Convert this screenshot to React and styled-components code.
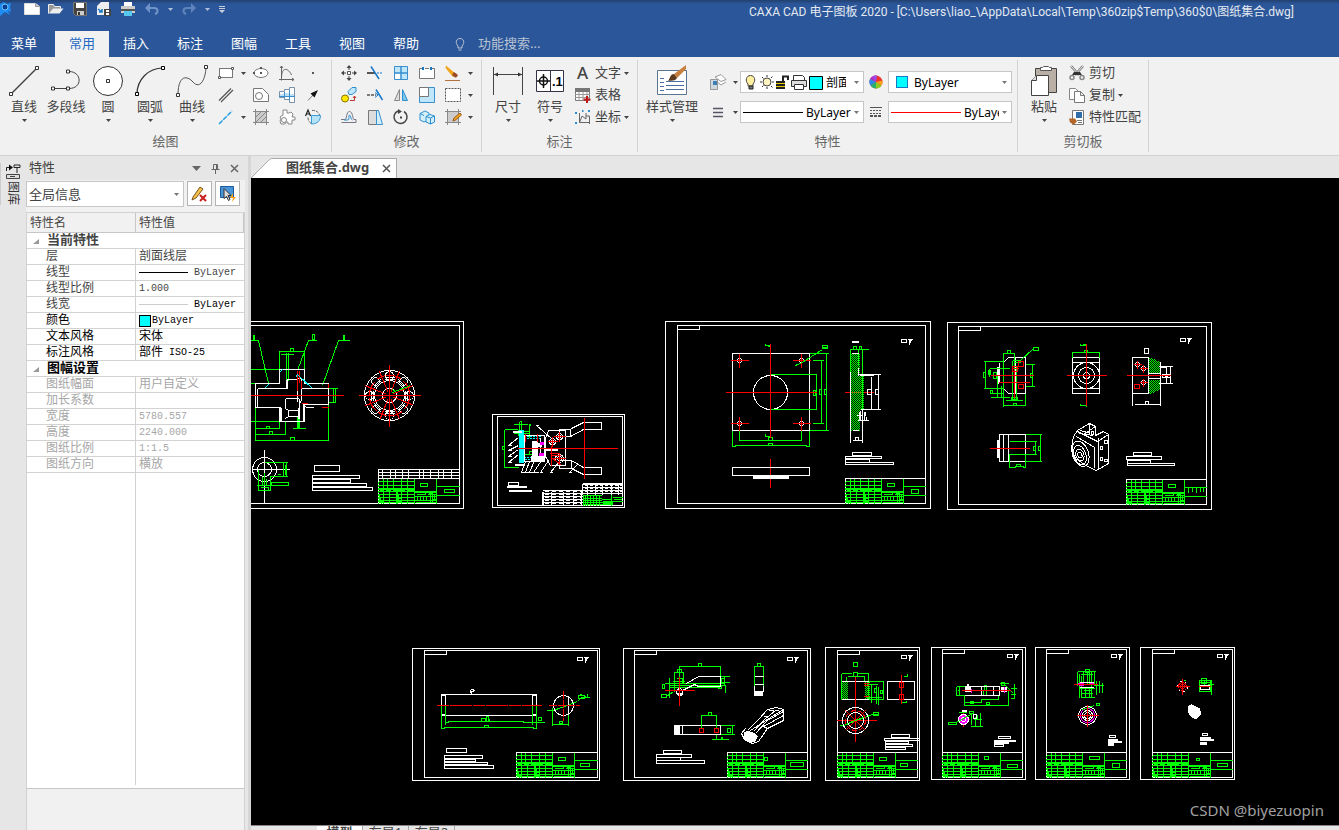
import React, { useState } from "react";
import styled, { createGlobalStyle } from "styled-components";

const uiFont = `"Noto Sans", "Noto Sans CJK SC", sans-serif`;
const titleFont = `Roboto, "Noto Sans CJK SC", sans-serif`;
const gridFont = `"Liberation Mono", "Noto Sans CJK SC", monospace`;

const ribbonTabs = ["常用", "插入", "标注", "图幅", "工具", "视图", "帮助"];

const properties = [
  { group: "当前特性" },
  { name: "层", value: "剖面线层" },
  { name: "线型", value: "ByLayer", line: "#000" },
  { name: "线型比例", value: "1.000", latin: true },
  { name: "线宽", value: "ByLayer", line: "#ccc", valueTone: "#000" },
  { name: "颜色", value: "ByLayer", swatch: true, tone: "#000" },
  { name: "文本风格", value: "宋体", tone: "#000" },
  { name: "标注风格", value: "部件", suffix: "ISO-25", tone: "#000" },
  { group: "图幅设置", tone: "#000" },
  { name: "图纸幅面", value: "用户自定义", tone: "#a6a6a6" },
  { name: "加长系数", value: "", tone: "#a6a6a6" },
  { name: "宽度", value: "5780.557", latin: true, tone: "#a6a6a6" },
  { name: "高度", value: "2240.000", latin: true, tone: "#a6a6a6" },
  { name: "图纸比例", value: "1:1.5", latin: true, tone: "#a6a6a6" },
  { name: "图纸方向", value: "横放", tone: "#a6a6a6" },
];

/* ---------- icons ---------- */

// 18 x 18 icons
const smallIcons = {
  rect: (
    <>
      <rect x="2.5" y="4.5" width="13" height="9" fill="#fff" stroke="#777" />
      <path d="M1.5 12.5h2v2h-2zM14.5 3.5h2v2h-2z" fill="#fff" stroke="#555" />
    </>
  ),
  ellipse: (
    <>
      <ellipse cx="9" cy="9" rx="7" ry="4.5" fill="#fff" stroke="#777" />
      <path d="M8 8h2v2H8zM1 8h2v2H1zM8 3h2v2H8z" fill="#555" />
    </>
  ),
  curveAxes: (
    <path d="M3.5 2v14.5M1 15.5h15M3.5 14c0-12 7-10 10-3M2 4l1.5-2L5 4M14 14l2 1.5-2 1.5" fill="none" stroke="#666" />
  ),
  point: <path d="M8 8h2v2H8z" fill="#555" />,
  parallel: <path d="M2 14.5 14 2.5M4 16 16 4" stroke="#555" strokeWidth="1.2" />,
  hole: (
    <>
      <path d="M1.5 2.5h9l6 6v7h-15z" fill="#fff" stroke="#777" />
      <circle cx="7" cy="10" r="3.5" fill="#fff" stroke="#777" />
    </>
  ),
  shaft: (
    <>
      <path d="M1.5 5.5h5v-2h5v-2h5v15h-5v-3h-5v-2h-5z" fill="#fff" stroke="#7a92a8" />
      <path d="M2 8h5v3H2zM7 7h4v4H7zM12 8h4v3h-4z" fill="#bfe0f5" />
      <path d="M1 10.5h16M11.5 4v10M6.5 6v6" stroke="#3a8fcf" />
    </>
  ),
  arrow: (
    <>
      <path d="M4 14.5 10 8" stroke="#777" />
      <path d="M14 4 6.5 7.5l4 4z" fill="#111" />
    </>
  ),
  construct: <path d="M2 16 15 3" stroke="#28a0e0" strokeWidth="1.5" strokeDasharray="5 1" />,
  hatch: (
    <>
      <path d="M3.5 3.5h11v11h-11z" fill="#ccc" stroke="#666" />
      <path d="M1 3.5h16M1 14.5h16M3.5 1v16M14.5 1v16M4 9l5-5M4 14 14 4M9 14l5-5" stroke="#888" fill="none" />
    </>
  ),
  gear: (
    <>
      <path d="M5 2h4v3h2l2-1 2 2-1 3h3v3h-3v4h-4v-2H8l-1 2H3l-1-3 1-2-1-2 3-2z" fill="#fff" stroke="#888" strokeLinejoin="round" />
      <circle cx="6" cy="12" r="2.5" fill="#fff" stroke="#888" />
    </>
  ),
  region: (
    <>
      <path d="M4 9.5a7 7 0 0 0 4 6.5M8 2.5a7 7 0 0 1 8 6" fill="none" stroke="#666" strokeDasharray="3 1" />
      <path d="M7.5 7.5h9c0 5-3 8.5-9 8.5z" fill="#b6e2f8" stroke="#3a9bd5" />
      <path d="M1.5 8 4 2l2.5 6M2.5 6h3" fill="none" stroke="#222" strokeWidth="1.2" />
    </>
  ),
  move: (
    <>
      <path d="M7.5 7.5h3v3h-3z" fill="#fff" stroke="#555" />
      <path d="M9 1 6.5 4h2v2h1V4h2zM9 17l-2.5-3h2v-2h1v2h2zM1 9l3-2.5v2h2v1H4v2zM17 9l-3-2.5v2h-2v1h2v2z" fill="#444" />
    </>
  ),
  trim: (
    <>
      <path d="M1 9h8" stroke="#555" strokeWidth="2" />
      <path d="M5 2.5 13 15" stroke="#1878c8" strokeWidth="1.5" />
      <path d="M11 9h6" stroke="#1878c8" strokeDasharray="2 1" />
    </>
  ),
  array: (
    <>
      <path d="M2.5 2.5h13v13h-13z" fill="#bfe6fb" stroke="#3a8fcf" />
      <path d="M3 10h6v5H3z" fill="#fff" />
      <path d="M9 2v14M2 9h14" stroke="#3a8fcf" strokeWidth="1.5" />
    </>
  ),
  stretchBox: (
    <>
      <path d="M4.5 4.5h-3v10h15v-10h-3M7 4.5h4" fill="#fff" stroke="#777" />
      <path d="M4 3h2v3H4zM12 3h2v3h-2z" fill="#1878c8" />
    </>
  ),
  pencil: (
    <>
      <path d="M2 1.5 12 10l-3 3L1.5 4z" fill="#f2a51c" />
      <path d="m10 8 3.5 2.5c1 1-1 3.5-2.5 3L8 11z" fill="#9b4a28" />
      <path d="M1 16.5h15" stroke="#b0713c" />
    </>
  ),
  copyMove: (
    <>
      <circle cx="5" cy="12.5" r="3.5" fill="#ffe500" stroke="#8a7600" />
      <path d="M8 5.5 12 1.5h4v4l-4 3H9z" fill="#bfe6fb" stroke="#2d8fd0" />
      <path d="M10 14.5h4.5v-4M13 12l1.5-2 1.5 2" fill="none" stroke="#b33" />
    </>
  ),
  extend: (
    <>
      <path d="M1 9h9" stroke="#555" strokeWidth="1.5" strokeDasharray="3 1" />
      <path d="M10 3.5 16.5 14" stroke="#1878c8" strokeWidth="1.5" />
      <path d="m9 6.5 3 2.5-3 2.5" fill="none" stroke="#1878c8" />
    </>
  ),
  mirror: (
    <>
      <path d="M7.5 3.5v11h-5z" fill="#ddd" stroke="#888" />
      <path d="M10.5 3.5v11h5z" fill="#7fc6ee" stroke="#2d8fd0" />
    </>
  ),
  scale: (
    <>
      <path d="M1.5 1.5h15v15h-15z" fill="#bfe6fb" stroke="#3a8fcf" />
      <path d="M1.5 1.5h9v9h-9z" fill="#fff" stroke="#777" />
    </>
  ),
  dashedBox: <path d="M1.5 2.5h15v13h-15z" fill="#fff" stroke="#555" strokeDasharray="2 1" />,
  offset: (
    <>
      <path d="M1 11.5h4c2 0 1-8 4.5-8s3 8 4.5 8h2v3H1.5" fill="none" stroke="#778" />
      <path d="M4 12h4c2 0 0-5 1.5-5s1 5 3 5" fill="none" stroke="#2d8fd0" />
    </>
  ),
  taper: (
    <>
      <path d="M2.5 2.5h8v14h-8z" fill="#ddd" stroke="#777" />
      <path d="M10.5 2.5h2l4 14h-6z" fill="#d4effc" stroke="#3a8fcf" />
    </>
  ),
  rotate: (
    <>
      <path d="M12 3.5A6.5 6.5 0 1 1 6 3" fill="none" stroke="#444" strokeWidth="1.5" />
      <path d="M6 1v5l4-2.5z" fill="#444" />
      <path d="M8 8.5h2v2H8z" fill="#444" />
    </>
  ),
  solid: (
    <>
      <path d="M2 5.5 7 3l4 2v7l-5 2-4-2z" fill="#d4effc" stroke="#2d8fd0" />
      <path d="M8 8.5 12 6.5l4.5 1.5v6l-4 2-4.5-2z" fill="#d4effc" stroke="#2d8fd0" />
      <path d="m8 8.5 4.5 1.5v6M12.5 10l4-2M2 5.5l4 2" fill="none" stroke="#2d8fd0" />
    </>
  ),
  editHatch: (
    <>
      <path d="M3.5 3.5h11v11h-11z" fill="#ccc" stroke="#666" />
      <path d="M1 3.5h16M1 14.5h16M3.5 1v16M14.5 1v16" stroke="#888" />
      <path d="m9 13 1-3 6-5 1.5 2-6 5z" fill="#f2a51c" stroke="#9b5a18" />
    </>
  ),
  letterA: (
    <text x="3" y="15" fontFamily="Noto Sans" fontSize="17" fontWeight="500" fill="#444">
      A
    </text>
  ),
  table: (
    <>
      <path d="M1.5 2.5h14v12h-14z" fill="#fff" stroke="#777" />
      <path d="M1 2h15v4H1z" fill="#777" />
      <path d="M1 8.5h15M1 11.5h15M5 6v9M9 6v9M13 6v9" stroke="#999" />
      <path d="M13 10v7M9.5 13.5h7" stroke="#c01818" strokeWidth="2" />
    </>
  ),
  coords: (
    <>
      <path d="M5.5 5v9.5H16M5.5 14.5 8 8l4 3V5M12 8h3.5v8" fill="none" stroke="#666" />
      <path d="M1 4h2v2H1zM1 14h2v2H1zM14 2h2v2h-2zM8 2h1.5v2H8z" fill="#2d8fd0" />
    </>
  ),
  layers: (
    <>
      <path d="m6 4 6-2.5 5 5-5 2zM6 7l6 5 5-3" fill="#fff" stroke="#999" />
      <path d="M1.5 6.5h7v10h-7z" fill="#cfd8de" stroke="#999" />
      <path d="M4 8h4v4H4z" fill="#3d7fb5" />
    </>
  ),
  lineWeight: <path d="M4 5.5h10M4 9.5h10M4 13.5h10" stroke="#556" strokeWidth="1.5" />,
  wheel: (
    <>
      <circle cx="9" cy="9" r="6.5" fill="#e33" />
      <path d="M9 9V2.5A6.5 6.5 0 0 0 3 6z" fill="#b033c8" />
      <path d="M9 9 3 6a6.5 6.5 0 0 0 .5 6.5z" fill="#2d8ae8" />
      <path d="m9 9-5.5 3.5A6.5 6.5 0 0 0 9 15.500z" fill="#28b070" />
      <path d="M9 9v6.5a6.5 6.5 0 0 0 5.5-3z" fill="#8ccc1f" />
      <path d="m9 9 5.5 3.5a6.5 6.5 0 0 0 1-5z" fill="#f5a21a" />
      <path d="M9 9 6 3.2A6.5 6.5 0 0 1 10 2.5z" fill="#9b4cf0" />
    </>
  ),
  lineStyle: (
    <>
      <path d="M3 4.5h12" stroke="#555" />
      <path d="M3 7.5h12M3 10.5h12" stroke="#555" strokeDasharray="2 1" />
      <path d="M3 13h12" stroke="#555" strokeWidth="2" strokeDasharray="3 1" />
    </>
  ),
  scissors: (
    <>
      <path d="m3 2 8 9M15 2l-8 9" stroke="#777" strokeWidth="2.5" />
      <path d="m3 2 8 9M15 2l-8 9" stroke="#eee" strokeWidth="1" />
      <path d="M6 8h6l2 3H4z" fill="#333" />
      <circle cx="4" cy="13.5" r="2" fill="none" stroke="#888" strokeWidth="1.5" />
      <circle cx="14" cy="13.5" r="2" fill="none" stroke="#888" strokeWidth="1.5" />
    </>
  ),
  copy: (
    <>
      <path d="M1.5 2.5h6l3 3v8h-9z" fill="#fff" stroke="#888" />
      <path d="M6.5 5.5h6l4 4v7h-10zM12.5 5.5v4h4" fill="#fff" stroke="#777" />
    </>
  ),
  match: (
    <>
      <path d="M4.5 2.5h11v14h-11z" fill="#fff" stroke="#777" />
      <path d="M8 4h6v6H8z" fill="#2f6ea8" />
      <path d="M9 12.5h5M10 14.5h4" stroke="#777" />
      <path d="M1 10.5h6l2 3-3 3-4-2z" fill="#b3652a" />
    </>
  ),
};

// 32 x 32 icons
const bigIcons = {
  line: (
    <>
      <path d="M3 29 29 3" stroke="#444" strokeWidth="1.5" />
      <path d="M1.5 27.5h3v3h-3zM27.5 1.5h3v3h-3z" fill="#fff" stroke="#333" />
    </>
  ),
  polyline: (
    <>
      <path d="M2 23.5h17c14 0 13-17 0-17" fill="none" stroke="#444" />
      <path d="M1.5 22h3v3h-3zM16.5 22h3v3h-3zM16.5 5h3v3h-3z" fill="#fff" stroke="#333" />
    </>
  ),
  circle: (
    <>
      <circle cx="16" cy="16" r="14.5" fill="#fff" stroke="#333" />
      <path d="M14.5 14.5h3v3h-3z" fill="#fff" stroke="#333" />
    </>
  ),
  arc: (
    <>
      <path d="M3 29C3 15 14 3 29 3" fill="none" stroke="#333" strokeWidth="1.2" />
      <path d="M1.5 27.5h3v3h-3zM27.5 1.5h3v3h-3z" fill="#fff" stroke="#000" />
    </>
  ),
  spline: (
    <>
      <path d="M2 30C2 10 11 10 17 17s12 0 13-14" fill="none" stroke="#555" />
      <path d="M.5 28.5h3v3h-3zM28.5 .5h3v3h-3z" fill="#fff" stroke="#333" />
    </>
  ),
  dimension: (
    <>
      <path d="M1.5 2v28M30.5 2v28M2 9.5h28" stroke="#444" />
      <path d="m2 9.5 4-2v4zM30 9.5l-4-2v4z" fill="#333" />
    </>
  ),
  tolerance: (
    <>
      <path d="M2.5 5.5h27v21h-27zM16.5 5.5v21" fill="#fff" stroke="#334" />
      <circle cx="9.5" cy="16" r="4" fill="none" stroke="#111" strokeWidth="1.5" />
      <path d="M3 16h13M9.5 9v14" stroke="#111" strokeWidth="1.5" />
      <text x="18" y="21" fontFamily="Liberation Sans" fontSize="13" fontWeight="bold" fill="#000">
        .1
      </text>
    </>
  ),
  styles: (
    <>
      <path d="M1.5 5.5h29v24h-29z" fill="#fff" stroke="#5a7590" />
      <path d="M4 13.5h4M10 16.5h18M10 20.5h18M10 24.5h18M4 17.5h4M4 21.5h4M4 25.5h4" stroke="#4a6fa0" />
      <path d="M30 0 18 9l3 4 9-9z" fill="#c67f3d" />
      <path d="m18 9 3 4c-2 4-6 2-9 3 2-2 2-7 6-7z" fill="#5c3a1e" />
    </>
  ),
  paste: (
    <>
      <path d="M7.5 3.5h21v24h-21z" fill="#b9afa4" stroke="#444" />
      <path d="M12.5 2.5h2l1-1h5l1 1h2v3h-11z" fill="#fff" stroke="#555" />
      <path d="M3.5 15.5l5-5h12v20h-17z" fill="#fff" stroke="#444" />
      <path d="M3.5 15.5h5v-5" fill="#ddd" stroke="#444" />
    </>
  ),
};

const SmallIcon = ({ name }) => (
  <svg width="18" height="18" viewBox="0 0 18 18" aria-hidden="true">
    {smallIcons[name]}
  </svg>
);

const BigIcon = ({ name }) => (
  <svg width="32" height="32" viewBox="0 0 32 32" aria-hidden="true">
    {bigIcons[name]}
  </svg>
);

const Caret = ({ color = "#444" }) => (
  <svg width="5" height="3" viewBox="0 0 5 3" aria-hidden="true">
    <path d="M0 0h5L2.5 3z" fill={color} />
  </svg>
);

/* ---------- ribbon parts ---------- */

const LargeTool = ({ icon, label, menu = true, wide }) => (
  <LargeButton $wide={wide}>
    <BigIcon name={icon} />
    <LargeLabel>{label}</LargeLabel>
    {menu && <Caret />}
  </LargeButton>
);

const IconTool = ({ icon, title }) => (
  <IconButton title={title} aria-label={title}>
    <SmallIcon name={icon} />
  </IconButton>
);

const MenuTool = ({ title, hidden }) =>
  hidden ? (
    <span />
  ) : (
    <IconButton aria-label={title}>
      <Caret />
    </IconButton>
  );

const TextTool = ({ icon, label, menu }) => (
  <TextButton>
    <SmallIcon name={icon} />
    <ToolLabel>{label}</ToolLabel>
    {menu && <Caret />}
  </TextButton>
);

const QuickAccess = () => (
  <QuickBar>
    <svg width="16" height="18" viewBox="0 0 16 18" aria-hidden="true">
      <path d="M0 4 4 2l3 2 4-1-1 4 1 5-3-1 2 4-5-3-5 4" fill="#1e8cf0" />
      <circle cx="5" cy="7" r="3" fill="#0b3f94" stroke="#6cc4ff" />
    </svg>
    <QuickButton aria-label="新建">
      <svg width="16" height="18" viewBox="0 0 16 18">
        <path d="M.5 3.5h11l4 3v8H.5z" fill="#fff" stroke="#ddd" />
        <path d="M11.5 3.5v3h4" fill="#ccc" stroke="#999" />
      </svg>
    </QuickButton>
    <QuickButton aria-label="打开">
      <svg width="16" height="18" viewBox="0 0 16 18">
        <path d="M.5 13.5v-9h5l1 2h6v2" fill="#999" stroke="#eee" />
        <path d="m1 13.5 4-5h10.5l-4 5z" fill="#eee" />
      </svg>
    </QuickButton>
    <QuickButton aria-label="保存">
      <svg width="16" height="18" viewBox="0 0 16 18">
        <path d="M1.5 2.5h13v13h-11l-2-2z" fill="#444" stroke="#777" />
        <path d="M4 3h8v5H4z" fill="#fff" />
        <path d="M5 11h7v4H5z" fill="#ccc" />
        <path d="M6 12h2v3H6z" fill="#333" />
      </svg>
    </QuickButton>
    <QuickButton aria-label="另存为">
      <svg width="16" height="18" viewBox="0 0 16 18">
        <path d="m1 6 4-4h8v13H1z" fill="#eee" />
        <path d="M2 9l4 3M6 9v3H3" stroke="#1878c8" strokeWidth="1.5" fill="none" />
        <path d="M8 9h7v7H8z" fill="#444" />
        <path d="M10 10h3v2h-3zM10 13h3v2h-3z" fill="#fff" />
      </svg>
    </QuickButton>
    <QuickButton aria-label="打印">
      <svg width="16" height="18" viewBox="0 0 16 18">
        <path d="M4 2h8v4H4z" fill="#fff" />
        <path d="M1 6h14v7H1z" fill="#ccc" />
        <path d="M1 9h14v2H1z" fill="#555" />
        <path d="M4 11h8v5H4z" fill="#56c8f0" />
      </svg>
    </QuickButton>
    <QuickButton aria-label="撤销">
      <svg width="16" height="18" viewBox="0 0 16 18">
        <path d="M3 8h7c5 0 4 5 1 6" fill="none" stroke="#7094c8" strokeWidth="2" />
        <path d="M1 8 6 3v10z" fill="#7094c8" />
      </svg>
    </QuickButton>
    <Caret color="#b0c0da" />
    <QuickButton aria-label="重做">
      <svg width="16" height="18" viewBox="0 0 16 18">
        <path d="M13 8H6c-5 0-4 5-1 6" fill="none" stroke="#5f84bb" strokeWidth="2" />
        <path d="m15 8-5-5v10z" fill="#5f84bb" />
      </svg>
    </QuickButton>
    <Caret color="#b0c0da" />
    <QuickButton aria-label="自定义">
      <svg width="8" height="18" viewBox="0 0 8 18">
        <path d="M1 6h6v1H1zM1 8h6v1H1zM1 10h6l-3 3z" fill="#c8cfdb" />
      </svg>
    </QuickButton>
  </QuickBar>
);

const LayerState = () => (
  <svg width="83" height="20" viewBox="0 0 83 20" aria-hidden="true">
    <path d="M5 12C2 9 3 3.5 7.5 3.5S13 9 10 12v2H5z" fill="#ffefa0" stroke="#444" />
    <path d="M6 14h4v3H6z" fill="#777" stroke="#222" />
    <circle cx="24" cy="10" r="4" fill="#fff3c0" stroke="#444" />
    <path d="M24 3v2M24 15v2M17 10h2M29 10h2M19 5l1.5 1.5M28 14l1.5 1.5M19 15l1.5-1.5M28 6l1.5-1.5" stroke="#333" />
    <path d="M33 9h9v8h-9z" fill="#222" />
    <path d="M33 11.5h9M33 14.5h9" stroke="#e8c800" />
    <path d="M40 9V4.5h5V8" fill="none" stroke="#222" strokeWidth="2" />
    <path d="M50.5 8.5v-5h9l2 2v3" fill="#fff" stroke="#333" />
    <path d="M48.5 8.5h15v6h-15z" fill="#ddd" stroke="#333" />
    <path d="M51.5 12.5h9v5h-9z" fill="#fff" stroke="#333" />
    <path d="M66.5 4.5h13v13h-13z" fill="#0ff" stroke="#000" />
  </svg>
);

/* ---------- drawing sheets ---------- */

const W = "#fff";
const G = "#0f0";
const R = "#f00";

const Circles = ({ x, y, r, color = W }) =>
  r.map((radius) => <circle key={radius} cx={x} cy={y} r={radius} stroke={color} />);

const Cross = ({ x, y, w, h }) => (
  <path d={`M${x - w} ${y}h${w * 2}M${x} ${y - h}v${h * 2}`} stroke={R} />
);

const TitleBlock = ({ x, y, w = 80, top = [42, 5, 7, 3], side = [66, 11, 7, 4] }) => (
  <g transform={`translate(${x} ${y})`}>
    <path
      d="M0 3h36M0 7h36M0 10h36M0 11h36M0 13h36M0 16h36M0 19h36M0 22h36M0 24h36M5 0v25M9 0v12M15 0v12M23 0v25M29 0v25M11 13v12M18 13v12M19 13v12M20 16v8M36 0v25M1 15v9M2 19v5M3 22v3M36 13h22M36 14h22M38 16h9v-2M49 16h9M36 18h18M39 18v4M42 18v4M45 18v4M48 18v4M52 14v9M54 16v7M56 16v6M36 22h22M37 24h20M58 0v25"
      stroke={G}
    />
    <path d="M1 12h4M7 12h5M14 12h12M28 12h7M18 20h5M18 23h5M50 15h4M54 18h4M54 21h4M1 23h4" stroke={G} />
    <path d={`M58 8H${w}M58 17H${w}`} stroke={G} />
    <rect x={top[0]} y={top[1]} width={top[2]} height={top[3]} stroke={G} />
    {side && <rect x={side[0]} y={side[1]} width={side[2]} height={side[3]} stroke={G} />}
    <path d={`M0 25V0H${w}`} stroke={W} />
    <path d="M0 3v22" stroke={G} strokeDasharray="2 1" />
  </g>
);

const Sheet = ({ outer, inner, mark }) => (
  <g stroke={W}>
    <path d={`M${outer[0]} ${outer[1]}H${outer[2]}V${outer[3]}H${outer[0]}z`} />
    <path d={`M${inner[0]} ${inner[1]}H${inner[2]}V${inner[3]}H${inner[0]}z`} />
    <path d={`M${inner[0]} ${inner[1] + 4}h22v-4`} />
    <path d={`M${mark[0]} ${mark[1]}h5v3h-5zM${mark[0] + 6} ${mark[1]}h5M${mark[0] + 7} ${mark[1] + 1}h3M${mark[0] + 8} ${mark[1] + 1}v4M${mark[0] + 9} ${mark[1] + 1}v2`} />
  </g>
);

const Boxes = ({ list, color = W, filled }) =>
  list.map(([x, y, w, h]) => (
    <rect key={`${x}-${y}`} x={x} y={y} width={w} height={h} stroke={color} fill={filled ? color : "none"} />
  ));

const boltAngles = [0, 45, 90, 135, 180, 225, 270, 315];

const ShaftSheet = () => (
  <g transform="translate(245.5 310.5)">
    <path d="M0 11H218V198H0M0 15H214V193H0" stroke={W} />
    <path
      d="M8 24v6M9 24v6M4 30h9L23 73M67 24h2v5h-2zM71 30h-8L52 60M98 24v6M99 24v6M104 30H93L77 75M34 40v22M34 41h25v20M45 38h3v3h-3zM41 42v28M43 42v28M35 44h13M0 59h34M0 73h10M83 73v57H10V97M10 124h30v-14M10 118h24v-7M0 111h34M45 127h4v3h-4zM24 121h3v3h-3zM21 116h3v2h-3zM83 78h7v14h-7M88 78v14M92 78h-9M47 118h13M52 106v12M54 106v12M53 106v12"
      stroke={G}
    />
    <path
      d="M10 97V73h24V59h25v14h24M12 78v19M12 78h28M10 97h25v14h23V94h25M56 78h27v14M83 78v15M36 97v13M30 97h5M42 78v-9h10v22M41 69v9M52 68h4v22M40 88h13l3 5M40 90v8l3 2h10v-3M40 108l3-2h10M43 99v7M54 88v20M59 94v17M58 94l3 3h7M34 96v15M40 88v10M52 70v20M53 98v10"
      stroke={W}
    />
    <path d="M0 85h98M52 60v20M54 60v12M56 70v8M56 93h6M76 97h7M83 73v4" stroke={R} />
    <path d="M53 65 67 78M19 78l4-4M34 62l3-3M50 67l2-3" stroke="#0ff" />
    <Circles x={144} y={85} r={[25, 15, 7]} />
    {boltAngles.map((angle) => (
      <g key={angle} transform={`rotate(${angle} 144 85)`}>
        <circle cx="164" cy="85" r="4" stroke={W} />
        <path d="M160 80v10M162 80v10" stroke={W} />
        <path d="M148 85h22M164 80v10" stroke={R} transform="rotate(22 144 85)" />
      </g>
    ))}
    <circle cx="144" cy="85" r="20" stroke={R} strokeDasharray="6 3" />
    <path d="M113 85h62M144 54v62" stroke={R} />
    <path d="M147 82l18-7M147 79l4 3" stroke={G} />
    <Circles x={19} y={159} r={[12, 7]} />
    <path d="M19 139v54M6 159h38" stroke={W} />
    <path d="M19 152h23M38 152v14M40 154v10M41 152v14M24 166h18M13 159v21h12v-14M11 175h14M15 177h8v3M17 166v9M19 162v12M21 168v6M26 172h17v3H26zM32 164h3" stroke={G} />
    <Boxes list={[[69, 155, 25, 6], [67, 165, 47, 3], [67, 169, 38, 3], [67, 173, 54, 3], [67, 177, 60, 3]]} />
    <path d="M133 168v-9h81M133 162h81M133 165h81M137 159v9M145 159v9M150 159v9M157 159v9M163 159v9M174 159v9M178 159v9M185 159v9M193 159v9M198 159v9M206 159v9" stroke={W} />
    <TitleBlock x={133} y={168} w={81} side={[66, 11, 10, 3]} />
  </g>
);

const AssemblySheet = () => (
  <g transform="translate(485.5 405.5)">
    <path d="M7 9h132v93H7zM12 11h125v89H12z" stroke={W} />
    <path d="M86 23 98 17h18v7H98l-13 7H74v-7h11v7M86 55l12 7h18v7H98l-12-6H74v-8h12v8" stroke={W} />
    <path d="M63 25h17v35H65l-5-9V33z" stroke={W} />
    <path d="M19 24v38h14M19 24h13M17 41h2v3h-2zM28 19h14M34 16v8M36 16v8M34 16h2M33 24v6M44 18v14M45 18v2M28 28h16M36 26h8M33 49h14M44 46h3v3h-3z" stroke={G} />
    <rect x="34" y="25" width="4" height="32" fill="#0ff" stroke="#0ff" />
    <path d="M38 31h17M38 33h17M38 52h12M39 54h12" stroke="#0ff" strokeDasharray="2 1" />
    <path d="M39 30h20v26H39zM55 32v24" stroke={W} />
    <Boxes filled list={[[47, 36, 5, 15], [46, 51, 12, 4], [52, 38, 4, 3]]} />
    <Boxes filled list={[[28, 26, 8, 1], [30, 59, 8, 1], [60, 43, 12, 2]]} />
    <Boxes filled color="#f0f" list={[[55, 37, 3, 2], [54, 48, 4, 2]]} />
    <path d="M23 40l10-8M23 45l10-5M23 51l10-7M23 57l10-8M36 67l4-11M40 67l4-11M44 67l5-12M48 67l8-12M55 67l8-12M65 67l8-10M84 67l7-7M51 20l15 13M23 40h3M23 45h3M23 51h3M23 57h3M35 67h18M54 67h3M64 67h3M83 67h3M50 20h3" stroke={W} />
    <Circles x={67} y={36} r={[3, 1]} />
    <Circles x={74} y={31} r={[3, 1]} />
    <Circles x={74} y={53} r={[4, 2]} />
    <Cross x={67} y={36} w={5} h={5} />
    <Cross x={74} y={31} w={6} h={5} />
    <Cross x={74} y={53} w={6} h={6} />
    <path d="M32 43h100M99 12v61M66 40v20M40 28v8M52 28v8M64 48h10M65 50h10M66 52l10 8" stroke={R} />
    <path d="M23 77h10v3H23z" stroke={W} />
    <Boxes filled list={[[22, 81, 19, 1], [22, 83, 22, 0], [24, 85, 22, 1]]} />
    <path d="M57 85h40M57 88h40M57 91h40M57 94h40M57 97h40M57 86v14M58 86v14M66 86v14M78 86v14M88 86v14M96 86v14M97 78h40M97 79h40M97 82h40M97 85h40M97 88h40M97 78v11M102 78v11M110 78v11M117 78v11M126 78v11M133 78v11" stroke={W} />
    <path d="M59 86h37M59 89h37M59 92h37M59 95h37M59 98h37" stroke={W} strokeDasharray="4 3" />
    <path d="M99 80h38M99 83h38M99 86h38" stroke={W} strokeDasharray="3 2" />
    <path d="M98 89v11M100 89v11M102 89v11M105 89v11M108 89v11M111 89v11M114 89v11M98 90h18M98 93h18M98 95h18M98 97h29M98 99h29M116 94h10M117 96h10M117 98h10M126 89v11M127 92h10M127 96h10M128 94h8" stroke={G} />
  </g>
);

const PlateSheet = () => (
  <g transform="translate(660.5 315.5)">
    <Sheet outer={[5, 6, 270, 193]} inner={[17, 10, 265, 188]} mark={[241, 24]} />
    <path d="M72 38h77v77H72z" stroke={W} />
    <Circles x={110} y={77} r={[17]} />
    {[[79, 45], [141, 45], [79, 108], [141, 108]].map(([x, y]) => (
      <g key={`${x}-${y}`}>
        <circle cx={x} cy={y} r="2" stroke={W} />
        <Cross x={x} y={y} w={9} h={7} />
      </g>
    ))}
    <path
      d="M149 38h19M110 59h46v35h-46M152 45h11M161 45v63M163 108h-11M166 38v77M168 115h-19M153 75h2v5h-2zM159 74h2v5h-2zM164 74h2v5h-2zM79 115v10h62v-10M72 115v16h3v-1h71v1h3v-16M108 122h4v3h-4zM108 128h4v2h-4zM135 50l5-2 22-14M135 50l3-2M162 30h5v3h-5zM162 32h5M105 28v2h5M107 31h3M105 118v3h4v-1"
      stroke={G}
    />
    <path d="M65 77h91M110 28v94M110 143v29M184 77h29" stroke={R} />
    <path d="M72 152h77v8H72z" stroke={W} />
    <Boxes filled list={[[93, 161, 35, 2], [192, 26, 6, 1]]} />
    <rect x="190" y="38" width="9" height="77" fill="url(#checker)" />
    <rect x="198" y="60" width="5" height="34" fill="url(#checker)" />
    <path d="M190 33v23M202 33v61M190 34h18M198 34v16M193 31h3v3h-3zM199 31h2v3h-2z" stroke={G} />
    <path d="M190 56v71M198 52v8M198 59h22M199 60h14M218 59v35M200 94h20M202 94v33M211 61v32M207 74h4v5h-4zM215 74h3v5h-3zM192 125h9M195 122h3v3h-3zM191 38h7M192 115h6M199 96v8M200 95v10M204 96v8M205 96v4M206 101v4M197 105h11M196 100h6" stroke={W} />
    <Boxes list={[[192, 137, 19, 3], [185, 141, 36, 2], [185, 144, 24, 3], [185, 147, 48, 2]]} />
    <TitleBlock x={185} y={163} />
  </g>
);

const HousingSheet = () => (
  <g transform="translate(940.5 315.5)">
    <Sheet outer={[7, 7, 271, 194]} inner={[18, 11, 266, 189]} mark={[240, 23]} />
    <path d="M68 42h17v36H68l-5-5V47zM59 47v20M58 51v17M57 51v12M75 42v36" stroke={W} />
    <path
      d="M43 46h20M45 46v27M43 73h20M63 37v54M63 38h11M67 35h3v3h-3zM74 37v48M72 45v40M76 50v35M85 49h9M92 49v22M94 71h-9M90 58h2v4h-2zM65 85h17M50 82h19M57 60v22M61 70v12M49 53h20M49 53v8M43 57h2v5h-2zM48 55h2v4h-2zM53 57h3v6h-3zM50 75h2v3h-2zM51 78h12M63 90h22V78M73 88h3v2h-3zM80 45l13-12M93 32h5v3h-5zM72 45h8M73 47h7M60 80h1M71 82h6v2h-6z"
      stroke={G}
    />
    <path d="M50 60h43M58 67h31M78 46h5v5h-5zM72 51h5v5h-5zM78 69h5v4h-5zM74 54v28M71 53h7" stroke={R} />
    <path d="M132 42h27v36h-27zM132 47h27M132 73h27" stroke={W} />
    <Circles x={146} y={60} r={[13, 8, 3]} />
    <path d="M132 42v-5h27v5M144 35h3v2h-3zM140 28v2h6M142 29h4M140 88v2h6v1" stroke={G} />
    <path d="M146 28v62M126 60h40" stroke={R} />
    <path d="M208 42h3l9 5v11h-12zM208 64h12v10l-9 4h-3z" fill="url(#checker)" />
    <path d="M208 42h-16v48M192 78h16V42M220 46v44M194 89h25M205 86h3v3h-3zM208 58h12M208 63h12M220 52h6v16h-6M218 51h14M230 51v17M218 68h14M222 59h3v3h-3zM227 59h3v3h-3zM204 33h4v5h-4z" stroke={W} />
    {[[197, 49], [203, 53], [203, 67]].map(([x, y]) => (
      <g key={y}>
        <circle cx={x} cy={y} r="2" stroke={W} />
        <Cross x={x} y={y} w={4} h={4} />
      </g>
    ))}
    <path d="M186 60h44M194 69h5v4h-5z" stroke={R} />
    <path d="M59 119h26v27H59zM63 119v27M68 119v27M69 126h16M69 139h16M57 124v18M58 124v18" stroke={W} />
    <path d="M85 119h16M100 119v27M101 146H85M69 126h27M95 126v13M96 139H69v13M69 152h6v-1h8v1h2v-13M76 149h4v2h-4zM93 131h2v4h-2zM98 131h2v4h-2z" stroke={G} />
    <path d="M49 133h40" stroke={R} />
    <path d="m133 121 4-6 12-7 6 3v9l8-4 5 3v29l-12 7-9-4-12-8-4-10zM137 116l20 10 11-7M158 122v32M149 108v10M139 118l14 2M150 118l-10-3M155 111l-12 8M136 121l18 11v20" stroke={W} />
    <g stroke={W} transform="rotate(-18 141 138)">
      <ellipse cx="140" cy="138" rx="8" ry="13" />
      <ellipse cx="139" cy="139" rx="6" ry="10" />
      <ellipse cx="139" cy="139" rx="4" ry="6" />
      <ellipse cx="139" cy="139" rx="2" ry="3" />
    </g>
    <Boxes list={[[160, 131, 2, 3], [164, 125, 3, 3], [160, 142, 2, 3], [164, 144, 3, 2], [151, 116, 2, 3]]} />
    <Boxes list={[[193, 137, 18, 3], [186, 141, 35, 3], [187, 145, 23, 3], [187, 148, 47, 2]]} />
    <TitleBlock x={186} y={164} side={null} />
    <path d="M248 172v5M252 172v4M256 172v5M260 172v4M263 172v4" stroke={G} />
  </g>
);

const RollerSheet = () => (
  <g transform="translate(405.5 640.5)">
    <Sheet outer={[7, 8, 194, 140]} inner={[19, 10, 192, 137]} mark={[172, 17]} />
    <path d="M36 54h95v21H36zM40 54v21M127 54v21M36 74h4M127 74h4M36 55h4M127 55h4M65 49h3v2h-2v2M65 49v3M69 49v1" stroke={W} />
    <path d="M36 65v23h3v-1h89v1h3V65M40 65v19M40 82h3v-1h75v1h21M127 65v19M79 85h4v2h-4zM76 78h4v3h-4zM81 76h2v5h-2zM84 78v3M133 77h3v3h-3zM141 70h7l24-9 4-4h8M173 58h6v-3h-6zM175 54l7 3v-4M147 67v18M163 67v18M147 84h16M154 81h3v2h-3z" stroke={G} />
    <path d="M31 65h105" stroke={R} strokeDasharray="12 1 22 1" />
    <Circles x={158} y={65} r={[10]} />
    <path d="M163 57v17" stroke={W} />
    <path d="M143 65h31M158 50v30" stroke={R} strokeDasharray="8 1" />
    <Boxes list={[[41, 108, 20, 4], [39, 115, 38, 3], [39, 119, 31, 2], [39, 122, 43, 2], [39, 125, 49, 3]]} />
    <TitleBlock x={111} y={112} w={81} side={[64, 11, 9, 3]} />
  </g>
);

const ArmSheet = () => (
  <g transform="translate(405.5 640.5)">
    <Sheet outer={[218, 8, 405, 140]} inner={[229, 10, 402, 137]} mark={[382, 17]} />
    <path
      d="M274 25v30M274 26h41v20M293 23h3v3h-3zM269 31v20M278 31v12M269 32h9M272 29h4v3h-4zM264 37v20M259 43h60M264 45h54M264 47h50M257 44h2v4h-2zM256 54h5v3h-5zM261 56l7-5M271 38h6v5M267 41h12M315 36h9M319 36v9M315 42h9M314 45h6v7M316 38h3v4h-3zM313 45h3v3h-3z"
      stroke={G}
    />
    <path d="m281 43 12-7h22v10h-22l-4-2-12 6M273 49l5 2M271 54h6M272 55h4M272 53h5" stroke={W} />
    <Circles x={274} y={51} r={[3]} />
    <path d="M259 50h30M274 36v29" stroke={R} />
    <path d="M349 25v24M358 25v24M349 26h9M352 23h3v3h-3z" stroke={G} />
    <path d="M349 36h9M349 44h9" stroke={W} />
    <Boxes filled list={[[349, 51, 8, 4], [270, 86, 4, 7]]} />
    <path d="M349 45v6M358 45v6M269 85h46v9h-46zM277 85v9" stroke={W} />
    <path d="M296 88V74M296 75h15v13M303 72h3v3h-3zM315 85h14M327 85v9M329 94h-14M322 88h3v4h-3zM311 94v5M306 99h17M317 96v3M316 96v3" stroke={G} />
    <Boxes color={R} list={[[294, 88, 4, 4], [309, 88, 4, 4]]} />
    <path d="m342 90 12-12 8-9 9-2 7 2v11l-16 8-9 13-6 2-8-4-3-6 4-5M345 90l20-13 13-8M348 91l12-13 9-7M350 93l12-13 16-9M362 69l8 2M362 88l-4-2 20-11M358 76h4M369 70h4" stroke={W} />
    <path d="m339 92 4-1 6 2 3 3-3 5-4 1-6-5z" fill={W} stroke={W} />
    <Boxes list={[[258, 110, 18, 3], [251, 114, 35, 3], [251, 117, 24, 3], [251, 120, 48, 3]]} />
    <TitleBlock x={322} y={112} top={[37, 5, 3, 3]} side={[63, 10, 13, 4]} />
  </g>
);

const FlangeSheet = () => (
  <g transform="translate(815.5 640.5)">
    <Sheet outer={[10, 7, 104, 140]} inner={[22, 10, 102, 137]} mark={[86, 15]} />
    <rect x="26" y="41" width="6" height="18" fill="url(#checker)" />
    <rect x="49" y="41" width="5" height="18" fill="url(#checker)" />
    <path
      d="M26 33v26h27V33M26 33h10M42 33h11M32 36h17M31 36v5M49 36v5M38 32h4v4h-4zM38 22h4v4h-4zM26 41h42v18H53M61 45v18M53 44h9M56 44v18M63 46v18M59 48h2v4h-2zM65 50h2v3h-2zM50 57h16M88 36h4v-3M86 36v1M86 62h5v-2M24 85h4l29-11h5M58 72h5v3h-5z"
      stroke={G}
    />
    <path d="M26 41h27M26 59h27M72 41h27v18H72z" stroke={W} />
    <path d="M48 43h5M48 45h5M48 56h5M40 36v65M21 80h40M86 34v29M84 42h4v5h-4zM84 54h4v5h-4z" stroke={R} />
    <Circles x={40} y={80} r={[13, 8]} />
    <circle cx="40" cy="80" r="10" stroke={R} strokeDasharray="5 2" />
    <path d="M30 70l20 20M50 70 30 90" stroke={R} />
    <path d="M34 82l14-5" stroke={G} />
    <Boxes list={[[76, 94, 18, 3], [69, 98, 35, 2], [70, 101, 23, 2], [70, 104, 27, 2], [70, 107, 20, 2]]} />
    <TitleBlock x={22} y={112} side={[63, 11, 7, 3]} />
  </g>
);

const PinSheet = () => (
  <g transform="translate(815.5 640.5)">
    <Sheet outer={[116, 7, 210, 139]} inner={[127, 9, 207, 137]} mark={[192, 14]} />
    <path
      d="M141 46h8M141 46v9h9M144 46v9M142 50h2M149 55v10h44V50M149 62h17v-3h17v-4M169 45h2v10h-3zM155 61h3v2h-3zM171 62h3v2h-3zM184 43h9M186 42h3v3h-3zM190 45l8 8M199 43v15M195 48h6M195 54h5M195 58h4"
      stroke={G}
    />
    <path d="M149 46h35v9h-35M166 46v9M153 43v4M152 43v4M178 46v9" stroke={W} />
    <Boxes filled list={[[150, 47, 5, 4], [186, 47, 5, 4], [147, 70, 4, 1]]} />
    <path d="M156 48v4M189 46v6" stroke="#f0f" />
    <path d="M146 50h49M148 72v14M144 79h10" stroke={R} />
    <circle cx="148" cy="79" r="4" fill="#f0f" stroke="#f0f" />
    <Circles x={148} y={79} r={[2, 5]} />
    <path d="M133 82h8v2h-8zM141 82l16-9M154 71h4v2h-4zM143 72h8M156 72v12M160 76v10M165 72v14M155 86h12M158 79h8M162 74v5" stroke={G} />
    <Boxes list={[[158, 74, 3, 4], [183, 96, 12, 2], [179, 104, 9, 2]]} />
    <Boxes filled list={[[179, 100, 21, 1], [179, 102, 14, 1]]} />
    <TitleBlock x={127} y={112} top={[42, 4, 4, 3]} side={[65, 12, 10, 3]} />
  </g>
);

const BushingSheet = () => (
  <g transform="translate(815.5 640.5)">
    <Sheet outer={[220, 7, 314, 139]} inner={[231, 9, 311, 137]} mark={[296, 14]} />
    <path
      d="M262 31v14M264 33v24M266 35v22M268 31v12M272 31v12M274 31v12M276 31v26M279 31v14M262 31h18M265 34h12M270 29h4v3h-4zM278 45h10M281 40v14M284 40v12M287 42v10M264 48h15M266 57h13M270 48v8M274 48v8M268 50h8M265 53h12M281 63h3v2h-3z"
      stroke={G}
    />
    <path d="M264 42h14M264 47h14" stroke={W} />
    <path d="M258 44h24" stroke={R} />
    <path d="M262 43h6M274 43h4M263 45h5" stroke="#f0f" />
    <Circles x={272} y={75} r={[9, 5, 3]} />
    <circle cx="272" cy="75" r="7" stroke="#f0f" />
    <path d="M267 69l12-4" stroke={G} />
    <Cross x={272} y={75} w={11} h={11} />
    <Boxes list={[[294, 95, 6, 2]]} />
    <Boxes filled list={[[293, 99, 9, 1], [293, 101, 13, 1], [293, 103, 5, 2]]} />
    <TitleBlock x={231} y={112} top={[43, 4, 10, 3]} side={[66, 11, 7, 4]} />
  </g>
);

const CapSheet = () => (
  <g transform="translate(815.5 640.5)">
    <Sheet outer={[325, 7, 419, 139]} inner={[337, 9, 417, 137]} mark={[402, 14]} />
    <Circles x={367} y={46} r={[4, 2]} color={R} />
    <circle cx="367" cy="46" r="5" stroke={W} strokeDasharray="2 3" />
    <Cross x={367} y={46} w={7} h={8} />
    <path d="M368 40h2M384 40h11v11h-11zM386 38h5v5h-5zM389 40v6M396 39v15M392 44h6M384 42h12" stroke={G} />
    <path d="M385 45h9v4h-9z" stroke={W} />
    <path d="M383 46h12" stroke={R} />
    <path d="m373 66 3-2 3 2 5 2 1 6-4 4-4-1-4-5z" fill={W} stroke={W} />
    <Boxes list={[[387, 93, 5, 2]]} />
    <Boxes filled list={[[385, 97, 10, 1], [385, 99, 13, 1], [385, 102, 6, 2]]} />
    <TitleBlock x={337} y={112} top={[44, 6, 3, 2]} side={[65, 11, 10, 3]} />
  </g>
);

const DrawingArea = () => (
  <DrawingSvg width="1088" height="647" viewBox="251 178 1088 647" fill="none" shapeRendering="crispEdges">
    <defs>
      <pattern id="checker" width="2" height="2" patternUnits="userSpaceOnUse" patternTransform="translate(.5 .5)">
        <path d="M0 0h1v1H0zM1 1h1v1H1z" fill={G} />
      </pattern>
    </defs>
    <ShaftSheet />
    <AssemblySheet />
    <PlateSheet />
    <HousingSheet />
    <RollerSheet />
    <ArmSheet />
    <FlangeSheet />
    <PinSheet />
    <BushingSheet />
    <CapSheet />
  </DrawingSvg>
);

/* ---------- property panel ---------- */

const PropertyValue = ({ row }) => (
  <ValueBox $end={!!row.line}>
    {row.line && <LineSample $color={row.line} />}
    {row.swatch && <Swatch />}
    {row.latin || row.line || row.swatch ? <Latin>{row.value}</Latin> : <Hanzi>{row.value}</Hanzi>}
    {row.suffix && <Latin $spaced>{row.suffix}</Latin>}
  </ValueBox>
);

const PropertyPanel = () => (
  <Panel>
    <PanelHeader>
      <PanelTitle>特性</PanelTitle>
      <PanelButton aria-label="菜单">
        <svg width="9" height="5" viewBox="0 0 9 5">
          <path d="M0 0h9L4.5 5z" fill="#666" />
        </svg>
      </PanelButton>
      <PanelButton aria-label="固定">
        <svg width="9" height="11" viewBox="0 0 9 11">
          <path d="M2.5 6.5v-5h4v5M5.5 1.5v5M.5 6.5h8M4.5 7v4" fill="none" stroke="#666" />
        </svg>
      </PanelButton>
      <PanelButton aria-label="关闭">
        <svg width="9" height="9" viewBox="0 0 9 9">
          <path d="m1 1 7 7M8 1 1 8" stroke="#666" strokeWidth="1.5" />
        </svg>
      </PanelButton>
    </PanelHeader>
    <PanelTools>
      <Combo $height={26}>
        <ComboSelect $large aria-label="选择对象" defaultValue="全局信息">
          <option>全局信息</option>
        </ComboSelect>
        <Caret color="#777" />
      </Combo>
      <ToolButton aria-label="清除选择">
        <svg width="18" height="18" viewBox="0 0 18 18">
          <path d="m2 12 7-10 3 2-7 9-4 2z" fill="#f2c14a" stroke="#7a5520" />
          <path d="m9 10 6 6M15 10l-6 6" stroke="#c81e1e" strokeWidth="2" />
        </svg>
      </ToolButton>
      <ToolButton aria-label="快速选择">
        <svg width="18" height="18" viewBox="0 0 18 18">
          <path d="M1.5 1.5h13v11h-13z" fill="#4a94d8" stroke="#1b5a9c" />
          <path d="M5 3.5v10l2.5-2 2 4 1.5-1-2-4h3z" fill="#ddd" stroke="#333" />
          <path d="m14 8-3 5h3l-1 4 4-5h-3z" fill="#f5a21a" />
        </svg>
      </ToolButton>
    </PanelTools>
    <PropertyArea>
      <PropertyTable>
        <colgroup>
          <NameCol />
          <col />
        </colgroup>
        <thead>
          <tr>
            <HeadCell>特性名</HeadCell>
            <HeadCell>特性值</HeadCell>
          </tr>
        </thead>
        <tbody>
          {properties.map((row) =>
            row.group ? (
              <tr key={row.group}>
                <GroupCell colSpan={2} $tone={row.tone}>
                  <svg width="6" height="5" viewBox="0 0 6 5" aria-hidden="true">
                    <path d="M6 0v5H0z" fill="#999" />
                  </svg>
                  {row.group}
                </GroupCell>
              </tr>
            ) : (
              <tr key={row.name}>
                <NameCell $tone={row.tone}>{row.name}</NameCell>
                <ValueCell $tone={row.valueTone || row.tone}>
                  <PropertyValue row={row} />
                </ValueCell>
              </tr>
            )
          )}
        </tbody>
      </PropertyTable>
      <EmptyRows />
      <Description />
    </PropertyArea>
  </Panel>
);

const App = () => {
  const [activeTab, setActiveTab] = useState("常用");

  return (
    <Window>
      <GlobalStyle />
      <TitleBar>
        <QuickAccess />
        <WindowTitle>
          {"CAXA CAD 电子图板 2020 - [C:\\Users\\liao_\\AppData\\Local\\Temp\\360zip$Temp\\360$0\\图纸集合.dwg]"}
        </WindowTitle>
      </TitleBar>

      <TabBar>
        <MenuButton>菜单</MenuButton>
        {ribbonTabs.map((tab) => (
          <RibbonTab key={tab} $active={tab === activeTab} onClick={() => setActiveTab(tab)}>
            {tab}
          </RibbonTab>
        ))}
        <SearchLabel>
          <svg width="10" height="14" viewBox="0 0 10 14" aria-hidden="true">
            <path d="M3 9C0 6 1 1.5 5 1.5S10 6 7 9v2H3zM3.5 13h3" fill="none" stroke="#b9c3d3" />
          </svg>
          <SearchInput placeholder="功能搜索..." aria-label="功能搜索" />
        </SearchLabel>
      </TabBar>

      <Ribbon>
        <RibbonGroup>
          <GroupBody $left={3} $right={5}>
            <LargeTool icon="line" label="直线" />
            <LargeTool icon="polyline" label="多段线" menu={false} />
            <LargeTool icon="circle" label="圆" />
            <LargeTool icon="arc" label="圆弧" />
            <LargeTool icon="spline" label="曲线" />
            <ToolGrid $columns="26px 9px 26px 26px 26px">
              <IconTool icon="rect" title="矩形" />
              <MenuTool title="矩形选项" />
              <IconTool icon="ellipse" title="椭圆" />
              <IconTool icon="curveAxes" title="公式曲线" />
              <IconTool icon="point" title="点" />
              <IconTool icon="parallel" title="平行线" />
              <MenuTool hidden />
              <IconTool icon="hole" title="孔" />
              <IconTool icon="shaft" title="轴" />
              <IconTool icon="arrow" title="箭头" />
              <IconTool icon="construct" title="中心线" />
              <MenuTool title="中心线选项" />
              <IconTool icon="hatch" title="剖面线" />
              <IconTool icon="gear" title="齿形" />
              <IconTool icon="region" title="局部放大" />
            </ToolGrid>
          </GroupBody>
          <GroupName>绘图</GroupName>
        </RibbonGroup>

        <RibbonGroup>
          <GroupBody $left={4} $right={6}>
            <ToolGrid $columns="repeat(5, 26px) 9px">
              <IconTool icon="move" title="平移" />
              <IconTool icon="trim" title="裁剪" />
              <IconTool icon="array" title="阵列" />
              <IconTool icon="stretchBox" title="打断" />
              <IconTool icon="pencil" title="删除" />
              <MenuTool title="删除选项" />
              <IconTool icon="copyMove" title="平移复制" />
              <IconTool icon="extend" title="延伸" />
              <IconTool icon="mirror" title="镜像" />
              <IconTool icon="scale" title="缩放" />
              <IconTool icon="dashedBox" title="分解" />
              <MenuTool title="分解选项" />
              <IconTool icon="offset" title="等距线" />
              <IconTool icon="taper" title="拉伸" />
              <IconTool icon="rotate" title="旋转" />
              <IconTool icon="solid" title="块" />
              <IconTool icon="editHatch" title="编辑剖面线" />
              <MenuTool title="编辑选项" />
            </ToolGrid>
          </GroupBody>
          <GroupName>修改</GroupName>
        </RibbonGroup>

        <RibbonGroup>
          <GroupBody $left={5} $right={8}>
            <LargeTool icon="dimension" label="尺寸" />
            <LargeTool icon="tolerance" label="符号" />
            <ToolList>
              <TextTool icon="letterA" label="文字" menu />
              <TextTool icon="table" label="表格" />
              <TextTool icon="coords" label="坐标" menu />
            </ToolList>
          </GroupBody>
          <GroupName>标注</GroupName>
        </RibbonGroup>

        <RibbonGroup>
          <GroupBody $left={4} $right={5}>
            <LargeTool icon="styles" label="样式管理" wide />
            <StyleGrid>
              <IconTool icon="layers" title="图层" />
              <MenuTool title="图层选项" />
              <Combo $height={22}>
                <LayerState />
                <ComboSelect $narrow aria-label="当前图层" defaultValue="剖面线层">
                  <option>剖面线层</option>
                </ComboSelect>
                <Caret color="#777" />
              </Combo>
              <IconTool icon="wheel" title="颜色" />
              <Combo $height={22}>
                <ColorBox />
                <ComboSelect aria-label="颜色" defaultValue="ByLayer">
                  <option>ByLayer</option>
                </ComboSelect>
                <Caret color="#777" />
              </Combo>
              <IconTool icon="lineWeight" title="线宽" />
              <MenuTool title="线宽选项" />
              <Combo $height={22}>
                <LinePreview $width={60} $color="#000" />
                <ComboSelect aria-label="线宽" defaultValue="ByLayer">
                  <option>ByLayer</option>
                </ComboSelect>
                <Caret color="#777" />
              </Combo>
              <IconTool icon="lineStyle" title="线型" />
              <Combo $height={22}>
                <LinePreview $width={70} $color="#f00" />
                <ComboSelect aria-label="线型" defaultValue="ByLayer">
                  <option>ByLayer</option>
                </ComboSelect>
                <Caret color="#777" />
              </Combo>
            </StyleGrid>
          </GroupBody>
          <GroupName>特性</GroupName>
        </RibbonGroup>

        <RibbonGroup>
          <GroupBody $left={5} $right={7}>
            <LargeTool icon="paste" label="粘贴" />
            <ToolList>
              <TextTool icon="scissors" label="剪切" />
              <TextTool icon="copy" label="复制" menu />
              <TextTool icon="match" label="特性匹配" />
            </ToolList>
          </GroupBody>
          <GroupName>剪切板</GroupName>
        </RibbonGroup>
      </Ribbon>

      <Workspace>
        <DockStrip>
          <DockTab>
            <svg width="16" height="16" viewBox="0 0 16 16" aria-hidden="true">
              <path d="M1.5 8V4.5H6M9 2h6v2.5H9zM12 4.5V10" fill="none" stroke="#222" />
              <path d="M4 1.5 8 4.5 4 7.5z" fill="#111" />
              <path d="M1.5 11.5h13v4h-13zM5 13.5h5" fill="#ddd" stroke="#444" />
            </svg>
            <DockText>图库</DockText>
          </DockTab>
        </DockStrip>
        <PropertyPanel />
        <Splitter />
        <DocumentPane>
          <DocumentTabs>
            <svg width="24" height="20" viewBox="0 0 24 20" aria-hidden="true">
              <path d="M0 20 18 2c1-1 2-1.5 4-1.5h2V20z" fill="#fff" />
              <path d="M0 20 18 2c1-1 2-1.5 4-1.5h2" fill="none" stroke="#aaa" />
            </svg>
            <DocumentTab>
              <DocumentName>图纸集合.dwg</DocumentName>
              <PanelButton aria-label="关闭文档">
                <svg width="9" height="9" viewBox="0 0 9 9">
                  <path d="m1 1 7 7M8 1 1 8" stroke="#555" strokeWidth="1.5" />
                </svg>
              </PanelButton>
            </DocumentTab>
          </DocumentTabs>
          <Canvas>
            <DrawingArea />
            <Watermark>CSDN @biyezuopin</Watermark>
          </Canvas>
          <LayoutTabs>
            <LayoutTab $active>模型</LayoutTab>
            <LayoutTab>布局1</LayoutTab>
            <LayoutTab>布局2</LayoutTab>
          </LayoutTabs>
        </DocumentPane>
      </Workspace>
    </Window>
  );
};

const GlobalStyle = createGlobalStyle`
  * {
    box-sizing: border-box;
  }

  body {
    margin: 0;
    font-family: ${uiFont};
    font-size: 13px;
    color: #444;
    background: #e6e6e6;
  }

  button, input, select {
    margin: 0;
    padding: 0;
    border: none;
    background: none;
    font: inherit;
    color: inherit;
  }

  svg {
    display: block;
    flex: none;
  }
`;

const Window = styled.div`
  height: 100vh;
  display: flex;
  flex-direction: column;
  overflow: hidden;
`;

const TitleBar = styled.header`
  flex: none;
  height: 31px;
  display: flex;
  align-items: flex-start;
  justify-content: space-between;
  padding-right: 45px;
  background: linear-gradient(#21416f 0, #2b579a 4px);
`;

const QuickBar = styled.div`
  display: flex;
  align-items: center;
  gap: 8px;
`;

const QuickButton = styled.button`
  display: flex;
`;

const WindowTitle = styled.div`
  font-family: ${titleFont};
  font-size: 12px;
  line-height: 24px;
  white-space: nowrap;
  color: #e4e9f1;
`;

const TabBar = styled.nav`
  flex: none;
  height: 26px;
  display: flex;
  background: #2b579a;
  color: #fff;
`;

const MenuButton = styled.button`
  width: 48px;
  margin-right: 7px;
  line-height: 22px;
  padding-bottom: 2px;
`;

const RibbonTab = styled.button`
  width: 54px;
  line-height: 22px;
  padding-bottom: 2px;
  color: ${(props) => (props.$active ? "#1e6ac4" : "#fff")};
  background: ${(props) => (props.$active ? "#f1f1f1" : "transparent")};
`;

const SearchLabel = styled.label`
  display: flex;
  align-items: center;
  gap: 13px;
  margin-left: 22px;
`;

const SearchInput = styled.input`
  width: 100px;
  height: 22px;
  margin-bottom: 2px;
  outline: none;

  &::placeholder {
    color: #b9c3d3;
    opacity: 1;
  }
`;

const Ribbon = styled.div`
  flex: none;
  height: 99px;
  display: flex;
  background: #f1f1f1;
  border-bottom: 1px solid #d2d2d2;
`;

const RibbonGroup = styled.section`
  margin: 3px 0;
  padding-top: 2px;
  border-right: 1px solid #d2d2d2;
`;

const GroupBody = styled.div`
  height: 66px;
  display: flex;
  padding-left: ${(props) => props.$left}px;
  padding-right: ${(props) => props.$right}px;
`;

const GroupName = styled.div`
  margin-top: 4px;
  line-height: 18px;
  text-align: center;
  color: #666;
`;

const LargeButton = styled.button`
  width: ${(props) => (props.$wide ? 60 : 42)}px;
  display: flex;
  flex-direction: column;
  align-items: center;
  padding-top: 3px;
  white-space: nowrap;
`;

const LargeLabel = styled.span`
  line-height: 18px;
  margin-bottom: 4px;
`;

const ToolGrid = styled.div`
  display: grid;
  grid-template-columns: ${(props) => props.$columns};
  grid-auto-rows: 22px;
`;

const IconButton = styled.button`
  display: flex;
  align-items: center;
  justify-content: center;
`;

const ToolList = styled.div`
  display: grid;
  grid-auto-rows: 22px;
  padding-left: 3px;
`;

const TextButton = styled.button`
  display: flex;
  align-items: center;
  gap: 3px;
  white-space: nowrap;
`;

const ToolLabel = styled.span`
  line-height: 18px;
  padding-bottom: 3px;
`;

const StyleGrid = styled.div`
  display: grid;
  grid-template-columns: 26px 9px 124px 24px 124px;
  grid-auto-rows: 22px;
  row-gap: 8px;
  padding: 9px 0 0 3px;
`;

const Combo = styled.div`
  flex: 1;
  height: ${(props) => props.$height}px;
  min-width: 0;
  display: flex;
  align-items: center;
  padding: 0 4px 0 2px;
  background: #fff;
  border: 1px solid #c6c6c6;
`;

const ComboSelect = styled.select`
  flex: 1;
  min-width: 0;
  margin-right: ${(props) => (props.$narrow ? 8 : 3)}px;
  appearance: none;
  outline: none;
  font-size: ${(props) => (props.$large ? 13 : 12)}px;
  color: ${(props) => (props.$large ? "#444" : "#000")};
  overflow: hidden;
`;

const ColorBox = styled.span`
  width: 12px;
  height: 12px;
  margin: 0 6px 0 5px;
  background: #0ff;
  border: 1px solid #1878c8;
`;

const LinePreview = styled.span`
  width: ${(props) => props.$width}px;
  height: 1px;
  margin-right: 3px;
  background: ${(props) => props.$color};
`;

const Workspace = styled.main`
  flex: 1;
  min-height: 0;
  display: flex;
`;

const DockStrip = styled.aside`
  flex: none;
  width: 26px;
  padding-top: 7px;
`;

const DockTab = styled.button`
  width: 24px;
  display: flex;
  flex-direction: column;
  align-items: center;
  gap: 2px;
  border-left: 1px solid #ccc;
`;

const DockText = styled.span`
  writing-mode: vertical-rl;
  text-orientation: sideways;
  font-size: 12px;
  line-height: 16px;
  color: #333;
`;

const Panel = styled.aside`
  flex: none;
  width: 219px;
  display: flex;
  flex-direction: column;
`;

const PanelHeader = styled.div`
  height: 24px;
  display: flex;
  align-items: center;
  gap: 10px;
  padding: 0 6px 0 3px;
`;

const PanelTitle = styled.h2`
  flex: 1;
  margin: 0;
  padding-bottom: 2px;
  font-size: 13px;
  line-height: 18px;
  font-weight: normal;
`;

const PanelButton = styled.button`
  display: flex;
`;

const PanelTools = styled.div`
  height: 32px;
  display: flex;
  align-items: flex-start;
  gap: 3px;
  padding: 1px 5px 0 0;
  background: #f1f1f1;
`;

const ToolButton = styled.button`
  width: 25px;
  height: 25px;
  display: flex;
  align-items: center;
  justify-content: center;
  background: #fff;
  border: 1px solid #b4b4b4;
`;

const PropertyArea = styled.div`
  flex: 1;
  display: flex;
  flex-direction: column;
  background: #fff;
  border: 1px solid #d2d2d2;
  border-bottom: none;
`;

const PropertyTable = styled.table`
  width: 100%;
  table-layout: fixed;
  border-collapse: separate;
  border-spacing: 0;
  font-family: ${gridFont};
  font-size: 12px;
  line-height: 15px;
`;

const NameCol = styled.col`
  width: 109px;
`;

const HeadCell = styled.th`
  height: 20px;
  padding: 4px 0 0 3px;
  font-weight: normal;
  text-align: left;
  background: #f1f1f1;
  border-right: 1px solid #c6c6c6;
  border-bottom: 1px solid #c6c6c6;
`;

const NameCell = styled.td`
  height: 16px;
  padding: 2px 0 0 19px;
  line-height: 13px;
  color: ${(props) => props.$tone || "#444"};
  border-right: 1px solid #d2d2d2;
  border-bottom: 1px solid #d2d2d2;
`;

const ValueCell = styled.td`
  height: 16px;
  padding: 0 8px 0 3px;
  color: ${(props) => props.$tone || "#444"};
  border-bottom: 1px solid #d2d2d2;
`;

const GroupCell = styled.td`
  height: 16px;
  padding: 0 0 0 6px;
  font-size: 13px;
  font-weight: bold;
  color: ${(props) => props.$tone || "#444"};
  border-bottom: 1px solid #d2d2d2;

  svg {
    display: inline-block;
    margin-right: 8px;
  }
`;

const ValueBox = styled.div`
  height: 15px;
  display: flex;
  align-items: center;
  justify-content: ${(props) => (props.$end ? "space-between" : "flex-start")};
`;

const Latin = styled.span`
  margin-left: ${(props) => (props.$spaced ? 6 : 0)}px;
  font-size: 10px;
`;

const Hanzi = styled.span`
  padding-top: 2px;
  line-height: 13px;
`;

const LineSample = styled.span`
  width: 49px;
  height: 1px;
  background: ${(props) => props.$color};
`;

const Swatch = styled.span`
  width: 12px;
  height: 12px;
  margin-right: 1px;
  background: #0ff;
  border: 1px solid #000;
`;

const EmptyRows = styled.div`
  flex: 1;
  width: 109px;
  margin-bottom: 3px;
  border-right: 1px solid #d2d2d2;
`;

const Description = styled.div`
  height: 42px;
  background: #f1f1f1;
  border-top: 1px solid #c6c6c6;
`;

const Splitter = styled.div`
  flex: none;
  width: 6px;
  border-right: 3px solid #d6d6d6;
`;

const DocumentPane = styled.section`
  flex: 1;
  min-width: 0;
  display: flex;
  flex-direction: column;
`;

const DocumentTabs = styled.div`
  flex: none;
  height: 22px;
  display: flex;
  padding-top: 2px;
`;

const DocumentTab = styled.div`
  display: flex;
  align-items: center;
  gap: 13px;
  padding: 0 5px 0 11px;
  font-weight: bold;
  background: #fff;
  border-top: 1px solid #aaa;
  border-right: 1px solid #aaa;
`;

const DocumentName = styled.span`
  line-height: 16px;
  padding-bottom: 3px;
`;

const Canvas = styled.div`
  position: relative;
  flex: 1;
  min-height: 0;
  overflow: hidden;
  background: #000;
`;

const DrawingSvg = styled.svg`
  display: block;
`;

const Watermark = styled.div`
  position: absolute;
  right: 15px;
  bottom: 5px;
  font-size: 15px;
  line-height: 20px;
  color: #a0a0a0;
`;

const LayoutTabs = styled.div`
  flex: none;
  height: 5px;
  display: flex;
  align-items: flex-start;
  padding-left: 66px;
  overflow: hidden;
  border-top: 1px solid #888;
`;

const LayoutTab = styled.button`
  width: 46px;
  height: 12px;
  line-height: 12px;
  font-weight: ${(props) => (props.$active ? "bold" : "normal")};
  background: ${(props) => (props.$active ? "#fff" : "transparent")};
  border-right: 1px solid #aaa;
`;

export default App;
